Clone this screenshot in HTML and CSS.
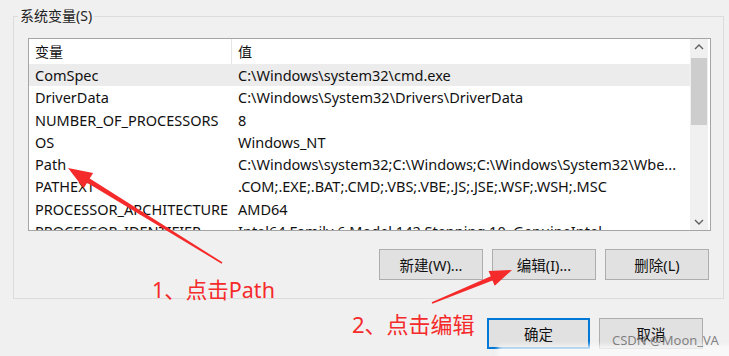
FILE: index.html
```html
<!DOCTYPE html>
<html lang="zh-CN">
<head>
  <meta charset="UTF-8" />
  <title>系统变量</title>
  <link rel="stylesheet" href="styles.css">
</head>
<body>
  <div class="dialog">
    <fieldset class="group">
      <legend>系统变量(S)</legend>
      <div class="listbox">
        <div class="list">
          <div class="row head"><span class="c1">变量</span><span class="c2">值</span></div>
          <div class="row sel"><span class="c1">ComSpec</span><span class="c2">C:\Windows\system32\cmd.exe</span></div>
          <div class="row"><span class="c1">DriverData</span><span class="c2">C:\Windows\System32\Drivers\DriverData</span></div>
          <div class="row"><span class="c1">NUMBER_OF_PROCESSORS</span><span class="c2">8</span></div>
          <div class="row"><span class="c1">OS</span><span class="c2">Windows_NT</span></div>
          <div class="row"><span class="c1">Path</span><span class="c2">C:\Windows\system32;C:\Windows;C:\Windows\System32\Wbe...</span></div>
          <div class="row"><span class="c1">PATHEXT</span><span class="c2">.COM;.EXE;.BAT;.CMD;.VBS;.VBE;.JS;.JSE;.WSF;.WSH;.MSC</span></div>
          <div class="row"><span class="c1">PROCESSOR_ARCHITECTURE</span><span class="c2">AMD64</span></div>
          <div class="row"><span class="c1">PROCESSOR_IDENTIFIER</span><span class="c2">Intel64 Family 6 Model 142 Stepping 10, GenuineIntel</span></div>
        </div>
        <div class="scrollbar">
          <svg class="chev" width="18" height="17" viewBox="0 0 18 17"><path d="M5 10 L9 6 L13 10" fill="none" stroke="#606060" stroke-width="1.4"/></svg>
          <div class="track"><div class="thumb"></div></div>
          <svg class="chev" width="18" height="17" viewBox="0 0 18 17"><path d="M5 7 L9 11 L13 7" fill="none" stroke="#606060" stroke-width="1.4"/></svg>
        </div>
      </div>
      <div class="actions">
        <button class="btn">新建(W)...</button>
        <button class="btn">编辑(I)...</button>
        <button class="btn">删除(L)</button>
      </div>
    </fieldset>
    <div class="footer">
      <button class="btn default">确定</button>
      <button class="btn">取消</button>
    </div>
  </div>

  <svg class="arrows" width="729" height="356" viewBox="0 0 729 356">
    <polygon fill="#f52a2a" points="68,168 93.1,172.9 89.7,178.5 222.4,262.3 221.6,263.7 87.1,182.7 83.7,188.3"/>
    <polygon fill="#f52a2a" points="512,270 494.7,285.8 492.5,280.5 432.3,303.7 431.7,302.3 490.8,276.3 488.6,271"/>
  </svg>
  <div class="note n1">1、点击Path</div>
  <div class="note n2">2、点击编辑</div>
  <div class="haze"></div>
  <div class="mark">CSDN @Moon_VA</div>
</body>
</html>
```

FILE: styles.css
```css
body {
  margin: 0;
  width: 729px;
  height: 356px;
  overflow: hidden;
  position: relative;
  background: #f0f0f0;
  font-family: "Noto Sans", "Noto Sans CJK SC", sans-serif;
  font-size: 14.5px;
  color: #111;
}
.dialog { padding-top: 8px; }
.group {
  margin: 0 0 0 13px;
  width: 711px;
  box-sizing: border-box;
  border: 1px solid #dcdcdc;
  padding: 14px 12px 18px 14px;
}
.group legend {
  margin-left: -10px;
  padding: 0 2px;
  line-height: 16px;
  font-size: 14px;
  color: #222;
}
.listbox {
  display: flex;
  height: 193px;
  box-sizing: border-box;
  border: 1px solid #a5a5a5;
  background: #fff;
  overflow: hidden;
}
.list { flex: 1; overflow: hidden; }
.row {
  display: flex;
  height: 22.3px;
  line-height: 22px;
  white-space: nowrap;
}
.row.head { height: 25px; line-height: 25px; font-size: 14px; }
.row.sel { background: #ececec; }
.c1 {
  width: 203px;
  flex: none;
  padding-left: 6px;
  box-sizing: border-box;
  overflow: hidden;
}
.head .c1 { border-right: 1px solid #e5e5e5; }
.c2 { padding-left: 6px; }
.scrollbar {
  width: 18px;
  margin-right: 2px;
  display: flex;
  flex-direction: column;
  background: #f0f0f0;
}
.chev { display: block; }
.track { flex: 1; padding: 2px 1px; }
.thumb { height: 67px; background: #cdcdcd; }
.actions {
  display: flex;
  justify-content: flex-end;
  gap: 9px;
  margin-top: 18px;
  padding-right: 2px;
}
.btn {
  width: 104px;
  height: 31px;
  border: 1px solid #adadad;
  background: #e1e1e1;
  font-family: "Noto Sans", "Noto Sans CJK SC", sans-serif;
  font-size: 14.5px;
  color: #111;
  padding: 0;
}
.footer {
  display: flex;
  justify-content: flex-end;
  gap: 9px;
  margin-top: 19px;
  padding-right: 26px;
}
.btn.default {
  width: 103px;
  border: 2px solid #0078d7;
}
.arrows { position: absolute; left: 0; top: 0; }
.note {
  position: absolute;
  color: #f52a2a;
  font-size: 21.5px;
  line-height: 24px;
  white-space: nowrap;
}
.n1 { left: 152px; top: 278px; }
.n2 { left: 352px; top: 312px; font-size: 22px; }
.haze {
  position: absolute;
  left: 498px;
  top: 345px;
  width: 240px;
  height: 20px;
  background: rgba(250, 250, 250, 0.8);
  filter: blur(2px);
}
.mark {
  position: absolute;
  left: 612px;
  top: 331px;
  font-size: 13px;
  color: rgba(110, 110, 110, 0.85);
  white-space: nowrap;
}
```
